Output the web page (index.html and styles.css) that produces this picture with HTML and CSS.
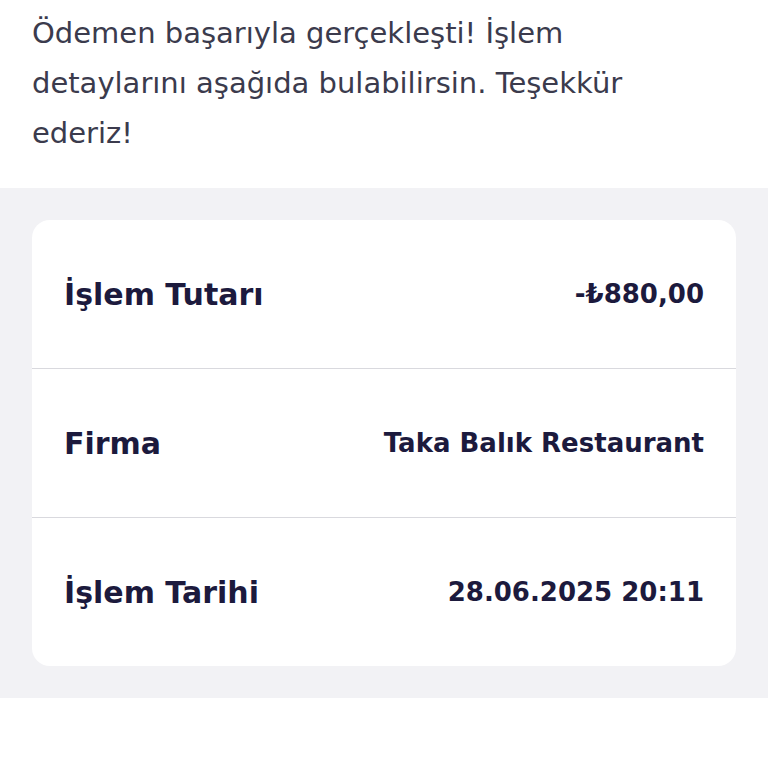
FILE: index.html
```html
<!DOCTYPE html>
<html lang="tr">
<head>
  <meta charset="UTF-8">
  <meta name="viewport" content="width=device-width, initial-scale=1.0">
  <title>İşlem Detayı</title>
  <link rel="stylesheet" href="styles.css">
</head>
<body>

  <p class="mesaj">Ödemen başarıyla gerçekleşti! İşlem detaylarını aşağıda bulabilirsin. Teşekkür ederiz!</p>

  <div class="detaylar">
    <div class="kart">
      <div class="satir">
        <span class="etiket">İşlem Tutarı</span>
        <span class="deger">-₺880,00</span>
      </div>
      <div class="satir">
        <span class="etiket">Firma</span>
        <span class="deger">Taka Balık Restaurant</span>
      </div>
      <div class="satir">
        <span class="etiket">İşlem Tarihi</span>
        <span class="deger">28.06.2025 20:11</span>
      </div>
    </div>
  </div>

</body>
</html>
```

FILE: styles.css
```css
body {
  font-family: "DejaVu Sans", "Noto Sans", sans-serif;
  background-color: #ffffff;
  margin: 0;
}

.mesaj {
  margin: 0;
  padding: 8px 48px 30px 32px;
  font-size: 29px;
  line-height: 50px;
  color: #3b3b4d;
}

.detaylar {
  background-color: #f2f2f5;
  padding: 32px;
}

.kart {
  background-color: #ffffff;
  border-radius: 18px;
}

.satir {
  display: flex;
  justify-content: space-between;
  align-items: center;
  height: 148px;
  padding: 0 32px;
  border-top: 1px solid #d9d9de;
}

.satir:first-child {
  border-top: none;
}

.etiket {
  font-size: 30px;
  font-weight: 600;
  color: #1c1a3d;
}

.deger {
  font-size: 26px;
  font-weight: 600;
  color: #1c1a3d;
}
```
